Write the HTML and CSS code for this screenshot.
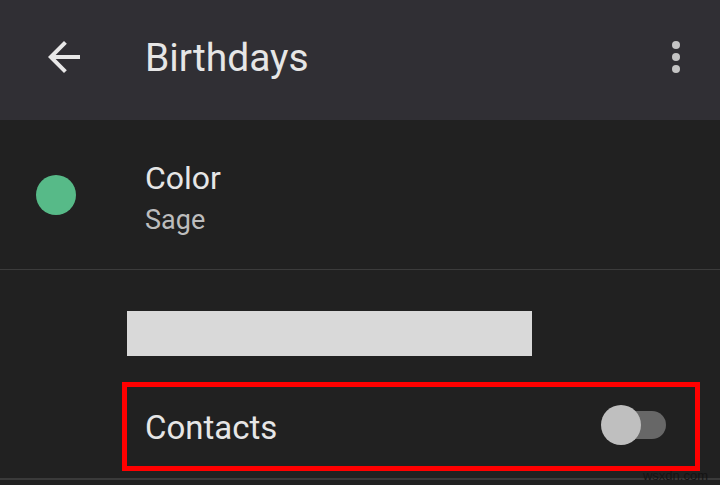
FILE: index.html
```html
<!DOCTYPE html>
<html lang="en">

<head>
    <meta charset="UTF-8">
    <meta name="viewport" content="width=device-width, initial-scale=1.0">
    <title>Birthdays</title>

    <link rel="stylesheet" href="styles.css">
</head>

<body>
    <div class="screen">
        <header class="topbar">
            <svg class="back" viewBox="0 0 24 24" width="48" height="48">
                <path d="M20 11H7.83l5.59-5.59L12 4l-8 8 8 8 1.41-1.41L7.83 13H20v-2z" fill="#e8e8e8"/>
            </svg>
            <h1 class="title">Birthdays</h1>
            <svg class="more" viewBox="0 0 24 24" width="48" height="48">
                <circle cx="12" cy="6" r="2" fill="#c4c4c4"/>
                <circle cx="12" cy="12" r="2" fill="#c4c4c4"/>
                <circle cx="12" cy="18" r="2" fill="#c4c4c4"/>
            </svg>
        </header>

        <div class="colorRow">
            <span class="swatch"></span>
            <div class="colorText">
                <p class="label">Color</p>
                <p class="sub">Sage</p>
            </div>
        </div>

        <div class="sourceRow">
            <div class="blank"></div>
            <div class="highlight">
                <span class="contacts">Contacts</span>
                <div class="toggle">
                    <span class="track"></span>
                    <span class="thumb"></span>
                </div>
            </div>
        </div>

        <span class="watermark">wsxdn.com</span>
    </div>
</body>

</html>
```

FILE: styles.css
```css
html {
font-family: Roboto, "Noto Sans", sans-serif;
}

body {
margin: 0;
background-color: #212121;
color: #e8e8e8;
}

.screen {
position: relative;
width: 720px;
height: 485px;
overflow: hidden;
background-color: #212121;
}

.topbar {
display: flex;
align-items: center;
height: 120px;
background-color: #302f34;
padding: 0 20px 0 40px;
box-sizing: border-box;
}

.back {
display: block;
margin-top: -6px;
}

.title {
margin: 0 0 5px 57px;
font-size: 39px;
font-weight: 400;
color: #e6e6e6;
flex: 1;
}

.more {
display: block;
margin-top: -6px;
}

.colorRow {
display: flex;
align-items: flex-start;
height: 150px;
padding-top: 39px;
border-bottom: 1px solid #3c3c3c;
box-sizing: border-box;
}

.swatch {
width: 40px;
height: 40px;
border-radius: 50%;
background-color: #57ba88;
margin: 16px 69px 0 36px;
}

.colorText p {
margin: 0;
}

.label {
font-size: 32px;
line-height: 38px;
color: #e6e6e6;
}

.colorText .sub {
margin-top: 7px;
font-size: 27px;
line-height: 32px;
color: #bdbdbd;
}

.sourceRow {
height: 210px;
padding: 41px 0 0 122px;
border-bottom: 2px solid #3a3a3a;
box-sizing: border-box;
}

.blank {
width: 405px;
height: 45px;
margin-left: 5px;
background-color: #d9d9d9;
}

.highlight {
display: flex;
align-items: center;
justify-content: space-between;
width: 578px;
height: 89px;
margin-top: 26px;
border: 5px solid #ff0000;
box-sizing: border-box;
padding: 0 29px 0 18px;
}

.contacts {
font-size: 33px;
color: #e6e6e6;
margin-top: 1px;
}

.toggle {
position: relative;
width: 65px;
height: 40px;
margin-top: -4px;
}

.track {
position: absolute;
right: 0;
top: 6px;
width: 52px;
height: 28px;
border-radius: 14px;
background-color: #676767;
}

.thumb {
position: absolute;
left: 0;
top: 0;
width: 40px;
height: 40px;
border-radius: 50%;
background-color: #bfbfbf;
}

.watermark {
position: absolute;
right: 12px;
bottom: 2px;
font-family: "Liberation Sans", sans-serif;
font-size: 13px;
color: #141414;
}
```
